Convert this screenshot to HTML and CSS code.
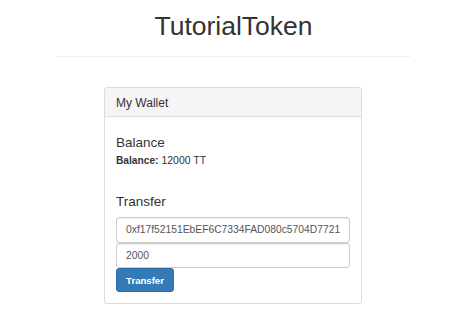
FILE: index.html
```html
<!DOCTYPE html>
<html>
<head>
<meta charset="utf-8">
<link rel="stylesheet" href="styles.css">
</head>
<body>
<div class="container">
  <h1 class="title">TutorialToken</h1>
  <hr class="rule">
  <div class="panel">
    <div class="panel-heading">My Wallet</div>
    <div class="panel-body">
      <h4 class="section-title">Balance</h4>
      <p class="balance"><strong>Balance:</strong> <span>12000 TT</span></p>
      <h4 class="section-title transfer-title">Transfer</h4>
      <input class="field" type="text" value="0xf17f52151EbEF6C7334FAD080c5704D7721">
      <input class="field" type="text" value="2000">
      <button class="btn" type="button">Transfer</button>
    </div>
  </div>
</div>
</body>
</html>
```
FILE: styles.css
```css
html, body {
  margin: 0;
  padding: 0;
  background: #fff;
}
body {
  font-family: "Liberation Sans", Arial, sans-serif;
  color: #333;
  font-size: 10.5px;
}
.container {
  width: 353px;
  margin-left: 57px;
}
.title {
  margin: 12px 0 0;
  font-size: 26.5px;
  font-weight: 400;
  line-height: 1.1;
  text-align: center;
  color: #333;
}
.rule {
  margin: 14.5px 0 0;
  border: 0;
  border-top: 1px solid #eee;
  height: 0;
}
.panel {
  width: 258px;
  box-sizing: border-box;
  margin: 30.5px 0 0 47px;
  border: 1px solid #ddd;
  border-radius: 3px;
  box-shadow: 0 1px 1px rgba(0,0,0,0.05);
}
.panel-heading {
  background: #f5f5f5;
  border-bottom: 1px solid #ddd;
  border-radius: 2px 2px 0 0;
  padding: 8.5px 11px 6px;
  font-size: 12px;
  line-height: 13px;
  color: #333;
}
.panel-body {
  padding: 11px;
  display: flex;
  flex-direction: column;
  align-items: flex-start;
}
.section-title {
  margin: 8px 0 3px;
  font-size: 13.5px;
  font-weight: 400;
  line-height: 1.1;
}
.transfer-title {
  margin-top: 27px;
  margin-bottom: 7px;
}
.balance {
  margin: 0;
  font-size: 10.5px;
  line-height: 15px;
}
.balance strong {
  font-size: 10.2px;
}
.field {
  display: block;
  width: 100%;
  box-sizing: border-box;
  height: 25.25px;
  margin: 0;
  padding: 0 7px 0 9px;
  border: 1px solid #ccc;
  border-radius: 3px;
  box-shadow: inset 0 1px 1px rgba(0,0,0,0.075);
  font-family: "Liberation Sans", Arial, sans-serif;
  font-size: 10.3px;
  color: #555;
  background: #fff;
}
.btn {
  display: block;
  width: 58px;
  height: 24.5px;
  margin: 0;
  padding: 0;
  background: #337ab7;
  border: 1px solid #2e6da4;
  border-radius: 3px;
  color: #fff;
  font-family: "Liberation Sans", Arial, sans-serif;
  font-weight: 700;
  font-size: 9.6px;
  text-align: center;
}
```
